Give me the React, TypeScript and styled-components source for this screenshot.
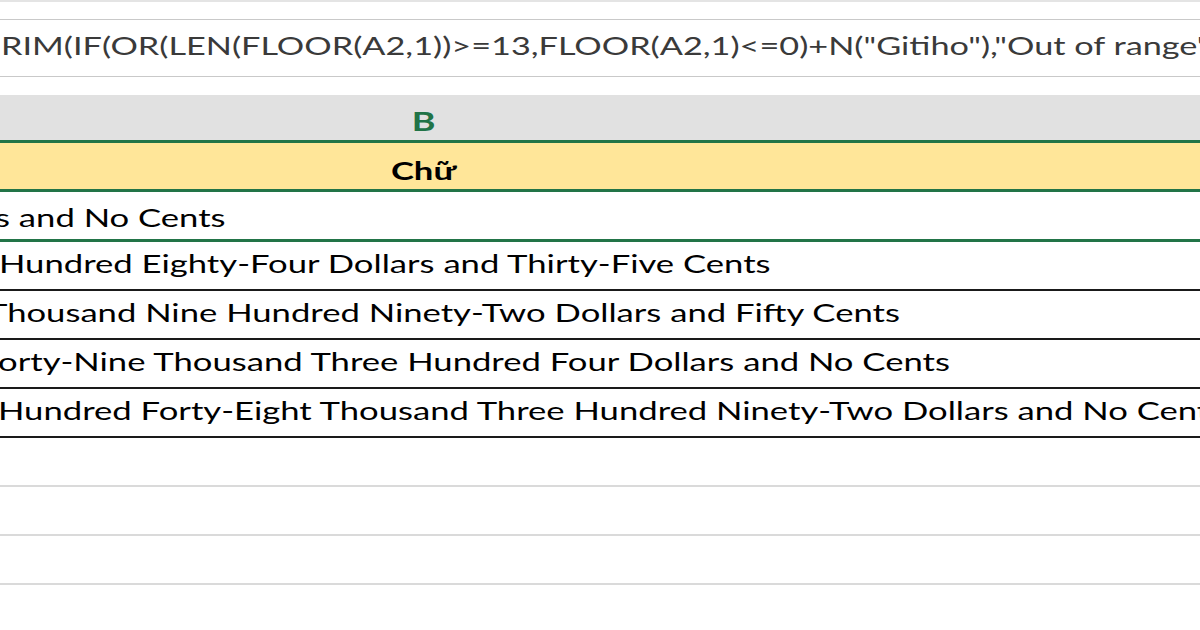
import React from "react";
import styled, { createGlobalStyle } from "styled-components";

const GlobalStyle = createGlobalStyle`
  html, body {
    margin: 0;
    padding: 0;
    background: #ffffff;
  }
  body {
    width: 1200px;
    height: 630px;
    overflow: hidden;
    font-family: Lato, "Open Sans", sans-serif;
  }
`;

const STRETCH = 1.385;

const Page = styled.div`
  width: 1200px;
  height: 630px;
  display: flex;
  flex-direction: column;
  overflow: hidden;
  background: #ffffff;
`;

const TopStrip = styled.div`
  height: 2px;
  background: #e4e4e4;
  margin-bottom: 17px;
  flex: none;
`;

const FormulaBar = styled.div`
  box-sizing: border-box;
  height: 58px;
  border-top: 1px solid #c9c9c9;
  border-bottom: 1px solid #c9c9c9;
  display: flex;
  align-items: flex-end;
  padding-bottom: 16px;
  overflow: hidden;
  flex: none;
  margin-bottom: 18px;
`;

const FormulaText = styled.span`
  display: block;
  font-family: Lato, "Open Sans", sans-serif;
  font-size: 25px;
  line-height: 30px;
  color: #3a3a3a;
  white-space: nowrap;
  margin-left: 1px;
  transform: scaleX(1.37);
  transform-origin: left center;
`;

const Sheet = styled.div`
  display: flex;
  flex-direction: column;
  flex: 1;
`;

const ColumnHeader = styled.div`
  box-sizing: border-box;
  height: 45px;
  background: #e1e1e1;
  display: flex;
  align-items: flex-end;
  justify-content: center;
  padding: 0 352px 4px 0;
  flex: none;
`;

const HeaderLabel = styled.span`
  display: block;
  font-family: Lato, "Open Sans", sans-serif;
  font-weight: 700;
  font-size: 26px;
  line-height: 30px;
  color: #217346;
  transform: scaleX(${STRETCH});
  transform-origin: center center;
`;

type RowProps = {
  $bg?: string;
  $top?: string;
  $bottom: string;
  $center?: boolean;
  $pad: number;
};

const Row = styled.div<RowProps>`
  box-sizing: content-box;
  height: ${(p) => (p.$center ? 46 : 47) - p.$pad}px;
  padding-bottom: ${(p) => p.$pad}px;
  padding-right: ${(p) => (p.$center ? "352px" : "0")};
  background: ${(p) => p.$bg ?? "#ffffff"};
  border-top: ${(p) => p.$top ?? "none"};
  border-bottom: ${(p) => p.$bottom};
  display: flex;
  align-items: flex-end;
  justify-content: ${(p) => (p.$center ? "center" : "flex-start")};
  overflow: hidden;
  white-space: nowrap;
  flex: none;
`;

const CellText = styled.span<{ $shift?: number; $bold?: boolean; $center?: boolean }>`
  display: block;
  flex: none;
  margin-left: ${(p) => p.$shift ?? 0}px;
  font-family: Lato, "Open Sans", sans-serif;
  font-size: 25px;
  line-height: 30px;
  font-weight: ${(p) => (p.$bold ? 700 : 400)};
  color: #000000;
  transform: scaleX(${STRETCH});
  transform-origin: ${(p) => (p.$center ? "center" : "left")} center;
`;

const GREEN = "3px solid #227447";
const BLACK = "2px solid #1a1a1a";
const GRID = "2px solid #dadada";

const rows: { text: string; shift: number; bottom: string; pad: number }[] = [
  { text: "s and No Cents", shift: -5, bottom: GREEN, pad: 7 },
  { text: "Hundred Eighty-Four Dollars and Thirty-Five Cents", shift: -1, bottom: BLACK, pad: 11 },
  { text: "Thousand Nine Hundred Ninety-Two Dollars and Fifty Cents", shift: -13, bottom: BLACK, pad: 11 },
  { text: "orty-Nine Thousand Three Hundred Four Dollars and No Cents", shift: -2, bottom: BLACK, pad: 11 },
  { text: "Hundred Forty-Eight Thousand Three Hundred Ninety-Two Dollars and No Cents", shift: -2, bottom: BLACK, pad: 11 },
  { text: "", shift: 0, bottom: GRID, pad: 0 },
  { text: "", shift: 0, bottom: GRID, pad: 0 },
  { text: "", shift: 0, bottom: GRID, pad: 0 },
];

export default function App() {
  return (
    <>
      <GlobalStyle />
      <Page>
        <TopStrip />
        <FormulaBar>
          <FormulaText>
            RIM(IF(OR(LEN(FLOOR(A2,1))&gt;=13,FLOOR(A2,1)&lt;=0)+N("Gitiho"),"Out of range"
          </FormulaText>
        </FormulaBar>
        <Sheet>
          <ColumnHeader>
            <HeaderLabel>B</HeaderLabel>
          </ColumnHeader>
          <Row $bg="#ffe699" $top={GREEN} $bottom={GREEN} $center $pad={4}>
            <CellText $bold $center>
              Chữ
            </CellText>
          </Row>
          {rows.map((r, i) => (
            <Row key={i} $bottom={r.bottom} $pad={r.pad}>
              <CellText $shift={r.shift}>{r.text}</CellText>
            </Row>
          ))}
        </Sheet>
      </Page>
    </>
  );
}
